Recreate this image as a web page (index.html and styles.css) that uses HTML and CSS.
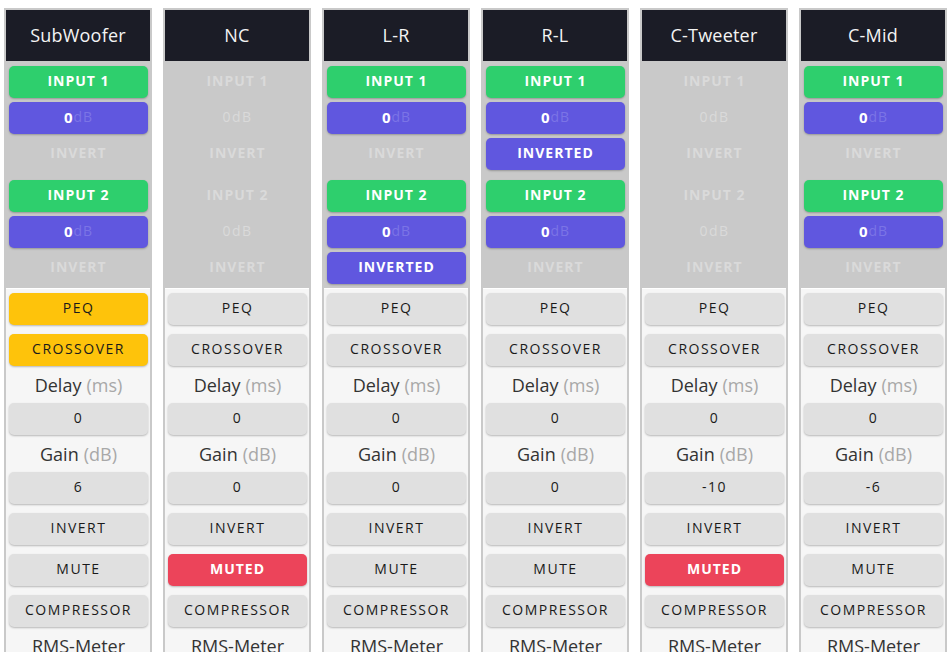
FILE: index.html
```html
<!DOCTYPE html>
<html>
<head>
<meta charset="utf-8">
<link rel="stylesheet" href="styles.css">
</head>
<body>
<div class="grid">
  <div class="col">
    <div class="head">SubWoofer</div>
    <div class="upper">
      <div class="btn green">INPUT 1</div>
      <div class="btn purple"><b>0</b><span class="unit">dB</span></div>
      <div class="btn off">INVERT</div>
      <div class="btn green gap">INPUT 2</div>
      <div class="btn purple"><b>0</b><span class="unit">dB</span></div>
      <div class="btn off">INVERT</div>
    </div>
    <div class="lower">
      <div class="btn yellow">PEQ</div>
      <div class="btn yellow">CROSSOVER</div>
      <div class="label">Delay <span class="dim">(ms)</span></div>
      <div class="btn grey">0</div>
      <div class="label">Gain <span class="dim">(dB)</span></div>
      <div class="btn grey">6</div>
      <div class="btn grey">INVERT</div>
      <div class="btn grey">MUTE</div>
      <div class="btn grey">COMPRESSOR</div>
      <div class="label">RMS-Meter</div>
    </div>
  </div>
  <div class="col">
    <div class="head">NC</div>
    <div class="upper">
      <div class="btn off">INPUT 1</div>
      <div class="btn off thin">0dB</div>
      <div class="btn off">INVERT</div>
      <div class="btn off gap">INPUT 2</div>
      <div class="btn off thin">0dB</div>
      <div class="btn off">INVERT</div>
    </div>
    <div class="lower">
      <div class="btn grey">PEQ</div>
      <div class="btn grey">CROSSOVER</div>
      <div class="label">Delay <span class="dim">(ms)</span></div>
      <div class="btn grey">0</div>
      <div class="label">Gain <span class="dim">(dB)</span></div>
      <div class="btn grey">0</div>
      <div class="btn grey">INVERT</div>
      <div class="btn red">MUTED</div>
      <div class="btn grey">COMPRESSOR</div>
      <div class="label">RMS-Meter</div>
    </div>
  </div>
  <div class="col">
    <div class="head">L-R</div>
    <div class="upper">
      <div class="btn green">INPUT 1</div>
      <div class="btn purple"><b>0</b><span class="unit">dB</span></div>
      <div class="btn off">INVERT</div>
      <div class="btn green gap">INPUT 2</div>
      <div class="btn purple"><b>0</b><span class="unit">dB</span></div>
      <div class="btn purple">INVERTED</div>
    </div>
    <div class="lower">
      <div class="btn grey">PEQ</div>
      <div class="btn grey">CROSSOVER</div>
      <div class="label">Delay <span class="dim">(ms)</span></div>
      <div class="btn grey">0</div>
      <div class="label">Gain <span class="dim">(dB)</span></div>
      <div class="btn grey">0</div>
      <div class="btn grey">INVERT</div>
      <div class="btn grey">MUTE</div>
      <div class="btn grey">COMPRESSOR</div>
      <div class="label">RMS-Meter</div>
    </div>
  </div>
  <div class="col">
    <div class="head">R-L</div>
    <div class="upper">
      <div class="btn green">INPUT 1</div>
      <div class="btn purple"><b>0</b><span class="unit">dB</span></div>
      <div class="btn purple">INVERTED</div>
      <div class="btn green gap">INPUT 2</div>
      <div class="btn purple"><b>0</b><span class="unit">dB</span></div>
      <div class="btn off">INVERT</div>
    </div>
    <div class="lower">
      <div class="btn grey">PEQ</div>
      <div class="btn grey">CROSSOVER</div>
      <div class="label">Delay <span class="dim">(ms)</span></div>
      <div class="btn grey">0</div>
      <div class="label">Gain <span class="dim">(dB)</span></div>
      <div class="btn grey">0</div>
      <div class="btn grey">INVERT</div>
      <div class="btn grey">MUTE</div>
      <div class="btn grey">COMPRESSOR</div>
      <div class="label">RMS-Meter</div>
    </div>
  </div>
  <div class="col">
    <div class="head">C-Tweeter</div>
    <div class="upper">
      <div class="btn off">INPUT 1</div>
      <div class="btn off thin">0dB</div>
      <div class="btn off">INVERT</div>
      <div class="btn off gap">INPUT 2</div>
      <div class="btn off thin">0dB</div>
      <div class="btn off">INVERT</div>
    </div>
    <div class="lower">
      <div class="btn grey">PEQ</div>
      <div class="btn grey">CROSSOVER</div>
      <div class="label">Delay <span class="dim">(ms)</span></div>
      <div class="btn grey">0</div>
      <div class="label">Gain <span class="dim">(dB)</span></div>
      <div class="btn grey">-10</div>
      <div class="btn grey">INVERT</div>
      <div class="btn red">MUTED</div>
      <div class="btn grey">COMPRESSOR</div>
      <div class="label">RMS-Meter</div>
    </div>
  </div>
  <div class="col">
    <div class="head">C-Mid</div>
    <div class="upper">
      <div class="btn green">INPUT 1</div>
      <div class="btn purple"><b>0</b><span class="unit">dB</span></div>
      <div class="btn off">INVERT</div>
      <div class="btn green gap">INPUT 2</div>
      <div class="btn purple"><b>0</b><span class="unit">dB</span></div>
      <div class="btn off">INVERT</div>
    </div>
    <div class="lower">
      <div class="btn grey">PEQ</div>
      <div class="btn grey">CROSSOVER</div>
      <div class="label">Delay <span class="dim">(ms)</span></div>
      <div class="btn grey">0</div>
      <div class="label">Gain <span class="dim">(dB)</span></div>
      <div class="btn grey">-6</div>
      <div class="btn grey">INVERT</div>
      <div class="btn grey">MUTE</div>
      <div class="btn grey">COMPRESSOR</div>
      <div class="label">RMS-Meter</div>
    </div>
  </div>
</div>
</body>
</html>
```
FILE: styles.css
```css
html, body {
  margin: 0;
  padding: 0;
  background: #ffffff;
  overflow: hidden;
  height: 652px;
}
body {
  font-family: "Open Sans", "Noto Sans", sans-serif;
}
.grid {
  display: grid;
  grid-template-columns: repeat(6, 148px);
  column-gap: 11px;
  padding: 8px 4px 0 4px;
}
.col {
  background: #c9c9c9;
  padding: 2px 2px 0 2px;
  display: flex;
  flex-direction: column;
}
.head {
  background: #1b1c26;
  color: #f4f4f4;
  height: 51px;
  padding-bottom: 2px;
  box-sizing: border-box;
  display: flex;
  align-items: center;
  justify-content: center;
  font-size: 18px;
  letter-spacing: 0.2px;
}
.upper {
  padding: 5px 2px 4px 3px;
  display: flex;
  flex-direction: column;
  gap: 4px;
}
.upper .gap {
  margin-top: 6px;
}
.btn {
  height: 32px;
  padding-bottom: 3px;
  border-radius: 5px;
  display: flex;
  align-items: center;
  justify-content: center;
  font-size: 14px;
  letter-spacing: 1.5px;
  box-sizing: border-box;
}
.green {
  background: #2ecf6d;
  color: #ffffff;
  font-weight: 700;
  letter-spacing: 1px;
  box-shadow: 0 1px 2px rgba(0,0,0,0.25);
}
.purple {
  background: #6057df;
  color: #ffffff;
  font-weight: 700;
  letter-spacing: 1px;
  box-shadow: 0 1px 2px rgba(0,0,0,0.25);
}
.purple b {
  font-weight: 700;
  font-size: 15px;
}
.unit {
  color: #7b74e6;
  font-weight: 400;
}
.off {
  color: #dadada;
  font-weight: 700;
  letter-spacing: 1px;
}
.off.thin {
  font-weight: 400;
  letter-spacing: 1.5px;
}
.lower {
  background: #f6f6f6;
  border-top: 1px solid #ffffff;
  padding: 4px 2px 0 3px;
  display: flex;
  flex-direction: column;
  flex: 1;
}
.lower .btn {
  margin: 0 0 9px 0;
  box-shadow: 0 1px 2px rgba(0,0,0,0.25);
}
.grey {
  background: #e0e0e0;
  color: #1a1a1a;
  font-weight: 500;
}
.yellow {
  background: #fec30b;
  color: #1a1a1a;
  font-weight: 500;
}
.red {
  background: #ec445a;
  color: #ffffff;
  font-weight: 700;
  letter-spacing: 1px;
}
.label {
  height: 28px;
  margin: -4px 0 4px 0;
  display: flex;
  align-items: center;
  justify-content: center;
  font-size: 18px;
  color: #333333;
}
.dim {
  color: #a8a8a8;
  margin-left: 5px;
}
```
